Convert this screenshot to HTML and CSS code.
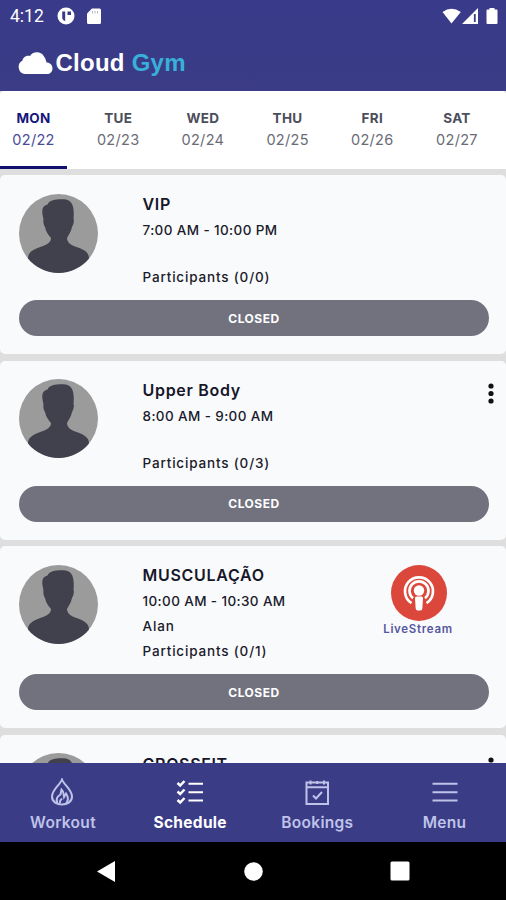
FILE: index.html
```html
<!DOCTYPE html>
<html lang="en">
<head>
    <meta charset="UTF-8">
    <meta name="viewport" content="width=device-width, initial-scale=1.0">
    <title>Cloud Gym - Schedule</title>
    <link rel="stylesheet" href="styles.css">
</head>
<body>
    <!-- shared shapes -->
    <svg class="defs" width="0" height="0">
        <symbol id="avatar" viewBox="0 0 79 79">
            <circle cx="39.5" cy="39.5" r="39.5" fill="#9b9b9b"/>
            <path fill="#41414e" d="M24.500 25C22.500 17 22.500 12 28.500 10.500C31 5 40 5 47 5.500C54 7 55.500 14 54.500 25C55.500 26 54.500 31 53 33C52 38 49.500 41 48 44C48 49 53 51.500 59 53.500C66 56 70 59 70 64.500A39.500 39.500 0 0 1 9 64.500C9 59 13 56 20 53.500C27 51 32 49 32 44C29.500 41 27 38 26 33C24.500 31 24 27 24.500 25Z"/>
        </symbol>
    </svg>

    <div class="app">
        <header class="header">
            <div class="status-bar">
                <span class="clock">4:12</span>
                <svg class="status-app" width="18" height="18" viewBox="0 0 18 18">
                    <circle cx="9" cy="9" r="8.500" fill="#fff"/>
                    <path d="M5.200 4.500h3v9.500c-2-.5-3-1.500-3-3.500zM10.500 4.500h3.500v3.500h-3.500z" fill="#3a3b86"/>
                </svg>
                <svg class="status-sd" width="14" height="17" viewBox="0 0 14 17">
                    <path d="M5 .5h7.500q1.500 0 1.500 1.500v12.500q0 1.500-1.500 1.500h-11q-1.500 0-1.500-1.500v-9z" fill="#fff"/>
                    <path d="M5.500 3v2.500M8 3v2.500M10.500 3v2.500" stroke="#b8b8da" stroke-width="1"/>
                </svg>
                <svg class="status-right" width="58" height="18" viewBox="0 0 58 18">
                    <path d="M1.500 5Q10.500-1.500 19.800 5L10.500 16.500z" fill="#fff"/>
                    <path d="M21 17L37 1v16z" fill="#fff"/>
                    <path d="M33.800 7v8" stroke="#3a3b86" stroke-width="1.800"/>
                    <path d="M48.500 1h5v1.500h2q1 0 1 1v12.500q0 1-1 1h-9q-1 0-1-1v-12.500q0-1 1-1h2z" fill="#fff"/>
                </svg>
            </div>
            <div class="brand">
                <svg width="35" height="22" viewBox="0 0 35 22">
                    <path d="M7 22A7.200 7.200 0 0 1 4.500 8.500C5 5 9 3 12 4C14-.5 23-1.500 26 4.500C28 7 28 9 28.500 10.500C32 10.500 34.500 13 34.500 16.500C34.500 20 32 22 29 22Z" fill="#fff"/>
                </svg>
                <span class="brand-name">Cloud <em>Gym</em></span>
            </div>
        </header>

        <nav class="days">
            <div class="day active"><b>MON</b><span>02/22</span></div>
            <div class="day"><b>TUE</b><span>02/23</span></div>
            <div class="day"><b>WED</b><span>02/24</span></div>
            <div class="day"><b>THU</b><span>02/25</span></div>
            <div class="day"><b>FRI</b><span>02/26</span></div>
            <div class="day"><b>SAT</b><span>02/27</span></div>
        </nav>

        <main class="classes">
            <section class="card">
                <div class="card-top">
                    <svg class="avatar"><use href="#avatar"/></svg>
                    <div class="info">
                        <h2>VIP</h2>
                        <p class="time">7:00 AM - 10:00 PM</p>
                        <p class="coach"></p>
                        <p class="people">Participants (0/0)</p>
                    </div>
                </div>
                <button class="status-btn">CLOSED</button>
            </section>

            <section class="card">
                <div class="card-top">
                    <svg class="avatar"><use href="#avatar"/></svg>
                    <div class="info">
                        <h2>Upper Body</h2>
                        <p class="time">8:00 AM - 9:00 AM</p>
                        <p class="coach"></p>
                        <p class="people">Participants (0/3)</p>
                    </div>
                    <svg class="more" width="6" height="22" viewBox="0 0 6 22">
                        <circle cx="3" cy="3" r="2.600"/><circle cx="3" cy="10.500" r="2.600"/><circle cx="3" cy="18" r="2.600"/>
                    </svg>
                </div>
                <button class="status-btn">CLOSED</button>
            </section>

            <section class="card">
                <div class="card-top">
                    <svg class="avatar"><use href="#avatar"/></svg>
                    <div class="info">
                        <h2>MUSCULAÇÃO</h2>
                        <p class="time">10:00 AM - 10:30 AM</p>
                        <p class="coach named">Alan</p>
                        <p class="people">Participants (0/1)</p>
                    </div>
                    <div class="live">
                        <svg width="56" height="56" viewBox="0 0 56 56">
                            <circle cx="28" cy="28" r="28" fill="#db473b"/>
                            <g fill="none" stroke="#fff" stroke-width="2.700">
                                <path d="M20.500 38.200A14 14 0 1 1 35.500 38.200"/>
                                <path d="M22 33.200A9.500 9.500 0 1 1 34 33.200"/>
                            </g>
                            <circle cx="28" cy="25.500" r="5.200" fill="#fff"/>
                            <path d="M24 33q0-1.500 1.500-1.500h5q1.500 0 1.500 1.500l-.6 10q-.2 2.500-2 2.500h-2.800q-1.800 0-2-2.500z" fill="#fff"/>
                        </svg>
                        <span>LiveStream</span>
                    </div>
                </div>
                <button class="status-btn">CLOSED</button>
            </section>

            <section class="card">
                <div class="card-top">
                    <svg class="avatar"><use href="#avatar"/></svg>
                    <div class="info">
                        <h2>CROSSFIT</h2>
                    </div>
                    <svg class="more" width="6" height="22" viewBox="0 0 6 22">
                        <circle cx="3" cy="3" r="2.600"/><circle cx="3" cy="10.500" r="2.600"/><circle cx="3" cy="18" r="2.600"/>
                    </svg>
                </div>
            </section>
        </main>

        <nav class="tabs">
            <a class="tab">
                <svg width="28" height="28" viewBox="0 0 28 28">
                    <path d="M13 1.500C11 7 3 11.500 3 18.500C3 24 8 26.500 13 26.500S23 24 23 18.500C23 11.500 15 7 13 1.500Z"/>
                    <path d="M8.500 25C6.500 21 8 18.500 11.500 16.500L12.500 11.500C15.500 14 14.500 17 15 19L17 15.500C19.500 19 19 23 17 25.500M11 25C10.500 22 12 22 13 20.500"/>
                </svg>
                <span>Workout</span>
            </a>
            <a class="tab active">
                <svg width="28" height="28" viewBox="0 0 28 28">
                    <path d="M12.500 5.800H27M12.500 14.200H27M12.500 22.600H27"/>
                    <path class="ticks" d="M1.500 5l2.700 2.500L8.500 3M1.500 13.500l2.700 2.500L8.500 11.500M1.500 22l2.700 2.500L8.500 20"/>
                </svg>
                <span>Schedule</span>
            </a>
            <a class="tab">
                <svg width="28" height="28" viewBox="0 0 28 28">
                    <path d="M3.500 4.500h21.500v21.500h-21.500zM3.500 9.200h21.500M7.500 2.500v4M14.200 3v3M21 2.500v4M10 17.500l3 3L19 14"/>
                </svg>
                <span>Bookings</span>
            </a>
            <a class="tab">
                <svg width="28" height="28" viewBox="0 0 28 28">
                    <path d="M1.500 5.700H26.500M1.500 14.200H26.500M1.500 22.600H26.500"/>
                </svg>
                <span>Menu</span>
            </a>
        </nav>

        <footer class="android-bar">
            <svg width="18" height="21" viewBox="0 0 18 21"><path d="M0 10.500L18 0v21z"/></svg>
            <svg class="home" width="19" height="19" viewBox="0 0 19 19"><circle cx="9.500" cy="9.500" r="9.300"/></svg>
            <svg width="20" height="20" viewBox="0 0 20 20"><rect x=".5" y=".5" width="19" height="19" rx="1.500"/></svg>
        </footer>
    </div>
</body>
</html>
```

FILE: styles.css
```css
* {
    margin: 0;
    padding: 0;
    box-sizing: border-box;
}

body {
    font-family: Inter, Roboto, "Liberation Sans", sans-serif;
    background: #dedede;
    color: #1b1b2b;
}

.defs {
    position: absolute;
}

.app {
    width: 506px;
    height: 900px;
    display: flex;
    flex-direction: column;
    overflow: hidden;
}

/* header */

.header {
    height: 91px;
    flex: none;
    background: linear-gradient(#393a8a, #3b3c85);
}

.status-bar {
    height: 32px;
    padding: 0 5px 0 10px;
    display: flex;
    align-items: center;
}

.clock {
    width: 47px;
    font-family: Roboto, sans-serif;
    font-size: 17.5px;
    line-height: 32px;
    color: #fff;
}

.status-sd {
    margin-left: 12px;
}

.status-right {
    margin-left: auto;
    margin-right: 2px;
}

.brand {
    display: flex;
    align-items: center;
    height: 32px;
    margin-top: 15px;
    padding-left: 18px;
}

.brand svg {
    margin-top: -1px;
}

.brand-name {
    margin-left: 2.5px;
    font-family: "Liberation Sans", Arial, sans-serif;
    font-size: 24px;
    font-weight: bold;
    letter-spacing: 0.25px;
    color: #fff;
}

.brand-name em {
    font-style: normal;
    color: #38b0d8;
}

/* day tabs */

.days {
    height: 78px;
    flex: none;
    display: flex;
    background: #fff;
    border-radius: 4px 4px 0 0;
}

.day {
    width: 67px;
    margin-right: 17.7px;
    flex: none;
    padding-top: 15.5px;
    text-align: center;
    color: #4c4e5c;
}

.day b,
.day span {
    display: block;
    line-height: 22px;
    white-space: nowrap;
}

.day b {
    font-size: 13.5px;
    font-weight: 700;
    letter-spacing: 0.3px;
}

.day span {
    font-size: 14.5px;
    letter-spacing: 0.3px;
    color: #6a6c76;
}

.day.active {
    color: #16177c;
    border-bottom: 3px solid #10116e;
}

.day.active span {
    color: #4a4b98;
}

/* class cards */

.classes {
    flex: 1;
    min-height: 0;
    overflow: hidden;
    padding-top: 6px;
}

.card {
    margin-bottom: 6.6px;
    padding: 16px 17px 18px 19px;
    background: #f9fafc;
    border-radius: 5px;
}

.card-top {
    display: flex;
    position: relative;
}

.avatar {
    width: 79px;
    height: 79px;
    margin-top: 2.5px;
    flex: none;
}

.info {
    margin-left: 44.5px;
    white-space: nowrap;
}

.info h2 {
    font-size: 16px;
    font-weight: 600;
    line-height: 26px;
    letter-spacing: 0.7px;
    color: #17172a;
}

.info p {
    font-size: 13.5px;
    font-weight: 500;
    line-height: 25px;
    letter-spacing: 0.83px;
}

.info .time {
    line-height: 27px;
    letter-spacing: 0.38px;
}

.info .coach {
    height: 21px;
}

.info .coach.named {
    height: 24px;
    line-height: 23px;
}

.status-btn {
    display: block;
    width: 470px;
    height: 36px;
    margin-top: 10px;
    border: none;
    border-radius: 18px;
    background: #72727e;
    color: #fff;
    font-family: inherit;
    font-size: 12px;
    font-weight: 700;
    letter-spacing: 0.5px;
}

.more {
    position: absolute;
    top: 6px;
    right: -5px;
    fill: #111;
}

.live {
    width: 72px;
    margin-left: auto;
    margin-right: 35px;
    padding-top: 3px;
    display: flex;
    flex-direction: column;
    align-items: center;
}

.live svg {
    margin-left: 2px;
}

.live span {
    font-size: 11.5px;
    font-weight: 600;
    line-height: 16px;
    letter-spacing: 0.7px;
    color: #5556a0;
}

/* bottom navigation */

.tabs {
    height: 79px;
    flex: none;
    display: grid;
    grid-template-columns: repeat(4, 127.2px);
    margin-left: -0.6px;
    background: #3b3c86;
}

.tab {
    display: flex;
    flex-direction: column;
    align-items: center;
    padding-top: 15px;
    color: #bfc3ea;
}

.tab svg {
    fill: none;
    stroke: currentColor;
    stroke-width: 2;
}

.tab .ticks {
    stroke-width: 2.5;
}

.tab span {
    margin-top: 6px;
    font-size: 15.5px;
    font-weight: 600;
    line-height: 22px;
    letter-spacing: 0.3px;
}

.tab.active {
    color: #fff;
}

.tab.active span {
    font-weight: 700;
}

.android-bar {
    height: 58px;
    flex: none;
    display: flex;
    align-items: center;
    justify-content: space-between;
    padding: 0 96.5px;
    background: #000;
}

.android-bar svg {
    fill: #fff;
}

.android-bar .home {
    margin-left: 3px;
}
```
